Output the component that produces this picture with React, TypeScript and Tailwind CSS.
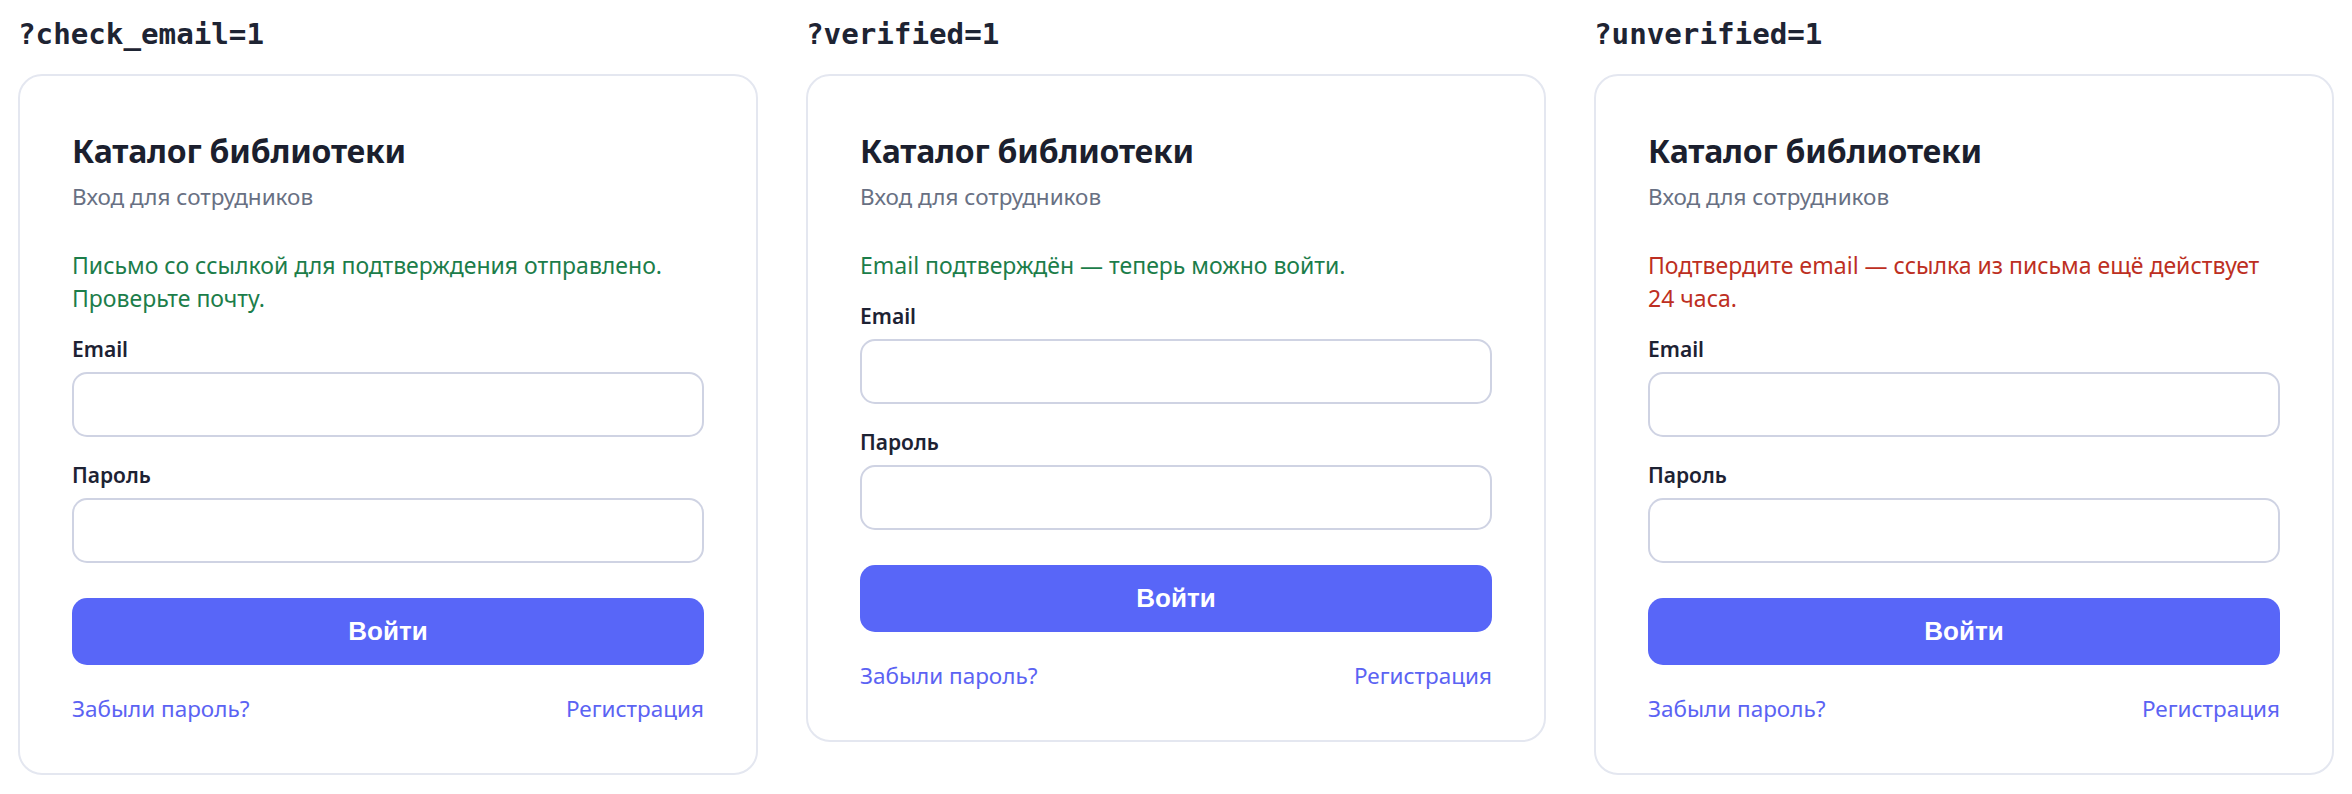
type Variant = {
  query: string
  message: string
  tone: 'ok' | 'warn'
}

const variants: Variant[] = [
  {
    query: '?check_email=1',
    message: 'Письмо со ссылкой для подтверждения отправлено. Проверьте почту.',
    tone: 'ok',
  },
  {
    query: '?verified=1',
    message: 'Email подтверждён — теперь можно войти.',
    tone: 'ok',
  },
  {
    query: '?unverified=1',
    message: 'Подтвердите email — ссылка из письма ещё действует 24 часа.',
    tone: 'warn',
  },
]

const sans = { fontFamily: '"Noto Sans", "Open Sans", sans-serif' }

function Field({ label, type }: { label: string; type: string }) {
  return (
    <label className="block">
      <span className="block text-[21px] leading-[31.5px] font-semibold text-[#1d2233]">{label}</span>
      <input
        type={type}
        className="mt-[6.5px] block w-full h-[65px] rounded-[15px] border-2 border-[#cfd3e3] bg-white px-4 outline-none"
      />
    </label>
  )
}

function LoginCard({ variant }: { variant: Variant }) {
  const toneClass = variant.tone === 'ok' ? 'text-[#1c7d4a]' : 'text-[#bd2f22]'

  return (
    <div
      style={sans}
      className="rounded-[24px] border-2 border-[#e4e7f0] bg-white px-[52px] pt-[54px] pb-[48px]"
    >
      <h1 className="text-[32px] leading-[42px] tracking-[-0.2px] font-bold text-[#1b1f2e]">Каталог библиотеки</h1>
      <p className="mt-[8px] text-[22.5px] leading-[33.75px] text-[#687083]">Вход для сотрудников</p>

      <p className={`mt-[36px] text-[23px] leading-[33px] ${toneClass}`}>{variant.message}</p>

      <div className="mt-[19px]">
        <Field label="Email" type="email" />
      </div>
      <div className="mt-[23px]">
        <Field label="Пароль" type="password" />
      </div>

      <button
        type="button"
        className="mt-[35px] flex h-[67px] w-full items-center justify-center rounded-[15px] bg-[#5866f8] text-[26px] font-bold text-white"
        style={{ fontFamily: '"Liberation Sans", Arial, sans-serif' }}
      >
        Войти
      </button>

      <div className="mt-[26.4px] flex justify-between text-[22.5px] leading-[33.75px] text-[#5b63f3]">
        <a href="#">Забыли пароль?</a>
        <a href="#">Регистрация</a>
      </div>
    </div>
  )
}

export default function App() {
  return (
    <div className="min-h-screen bg-white">
      <div className="grid grid-cols-3 items-start gap-x-[48px] px-[18px] pt-[17px]">
        {variants.map((v) => (
          <section key={v.query}>
            <h2
              className="mb-[22px] text-[29.2px] leading-[34.6px] font-bold text-[#1e2433]"
              style={{ fontFamily: '"DejaVu Sans Mono", "Liberation Mono", monospace' }}
            >
              {v.query}
            </h2>
            <LoginCard variant={v} />
          </section>
        ))}
      </div>
    </div>
  )
}
